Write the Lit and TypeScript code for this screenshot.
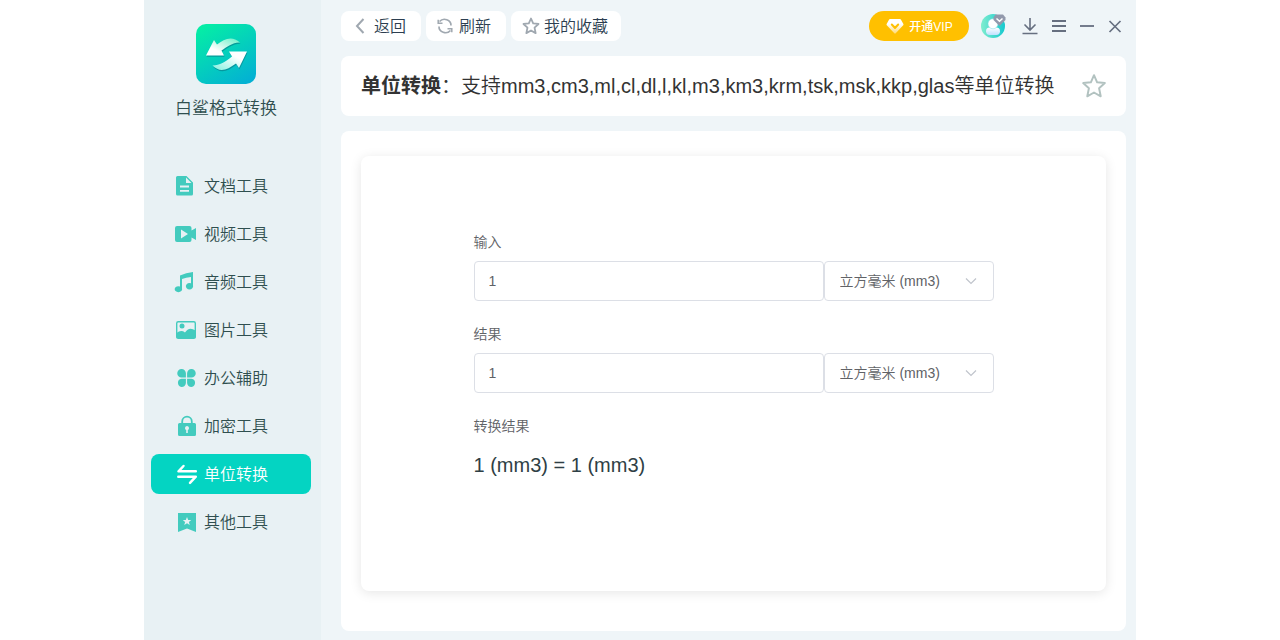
import { LitElement, html, css, svg } from "lit";
import { customElement, state } from "lit/decorators.js";
import { classMap } from "lit/directives/class-map.js";

const NAV = [
  {
    label: "文档工具",
    icon: svg`<path fill="currentColor" fill-rule="evenodd" d="M3.500 2H12.500L19 8.500V20a1.500 1.500 0 0 1-1.500 1.500H3.500A1.500 1.500 0 0 1 2 20V3.500A1.500 1.500 0 0 1 3.500 2zM12 3.500V9H17.500zM6 11.600V13.400H15V11.600zM6 16V17.800H15V16z"/>`,
  },
  {
    label: "视频工具",
    icon: svg`<path fill="currentColor" fill-rule="evenodd" d="M3 4H15.500a2 2 0 0 1 2 2V8.500L22 6V18L17.500 15.500V18a2 2 0 0 1-2 2H3a2 2 0 0 1-2-2V6a2 2 0 0 1 2-2zM7 7.500V16.500L14 12z"/>`,
  },
  {
    label: "音频工具",
    icon: svg`<path fill="currentColor" d="M6 5.500Q12 2.500 19 2V15.500A3.600 3.200 0 1 1 17 13.300V7Q12 7.300 8 9V18.500A3.700 3 0 1 1 6 16.500z"/>`,
  },
  {
    label: "图片工具",
    icon: svg`<rect x="2.700" y="3.700" width="18.600" height="16.600" rx="1.500" fill="none" stroke="currentColor" stroke-width="1.400"/><circle cx="8" cy="8" r="2.500" fill="currentColor"/><path fill="currentColor" d="M2.500 15Q7 11.500 11 14.500Q15 8 21.500 12.500V20H2.500z"/>`,
  },
  {
    label: "办公辅助",
    icon: svg`<path fill="currentColor" d="M7.500 3A4.200 4.200 0 0 1 11.900 7.200V11.500H7.500A4.200 4.200 0 0 1 7.500 3zM17.500 3A4.200 4.200 0 0 1 17.500 11.500H13.100V7.200A4.200 4.200 0 0 1 17.500 3zM7.500 21A4.200 4.200 0 0 1 7.500 12.700H11.900V17A4.200 4.200 0 0 1 7.500 21zM17.500 21A4.200 4.200 0 0 1 13.100 17V12.700H17.500A4.200 4.200 0 0 1 17.500 21z"/>`,
  },
  {
    label: "加密工具",
    icon: svg`<path d="M8.200 9.500V7.500a4.800 4.800 0 0 1 9.600 0V9.500" fill="none" stroke="currentColor" stroke-width="1.800"/><path fill="currentColor" fill-rule="evenodd" d="M5.500 9H20.500a1.500 1.500 0 0 1 1.500 1.500V20.500a1.500 1.500 0 0 1-1.500 1.500H5.500a1.500 1.500 0 0 1-1.500-1.500V10.500A1.500 1.500 0 0 1 5.500 9zM13 12a2.100 2.100 0 0 0-.8 4V19h1.600V16a2.100 2.100 0 0 0-.8-4z"/>`,
  },
  {
    label: "单位转换",
    icon: svg`<path d="M9.500 4L4.500 9.300H21.800M4.300 14.700H21.800L16 20.800" fill="none" stroke="currentColor" stroke-width="2.500" stroke-linecap="round" stroke-linejoin="round"/>`,
  },
  {
    label: "其他工具",
    icon: svg`<path fill="currentColor" fill-rule="evenodd" d="M4 3H22V22L13 18.500L4 22zM13 7L11.800 10H8.800L11.100 12L10.300 15L13 13.300L15.700 15L14.900 12L17.200 10H14.200z"/>`,
  },
];

const UNITS = [
  ["mm3", "立方毫米", 1],
  ["cm3", "立方厘米", 1e3],
  ["ml", "毫升", 1e3],
  ["cl", "厘升", 1e4],
  ["dl", "分升", 1e5],
  ["l", "升", 1e6],
  ["kl", "千升", 1e9],
  ["m3", "立方米", 1e9],
] as const;

const STAR = "M12 2L14.900 8.600L22 9.300L16.700 14.100L18.200 21.500L12 18L5.800 21.500L7.300 14.100L2 9.300L9.100 8.600z";

@customElement("app-root")
export class AppRoot extends LitElement {
  @state() private active = "单位转换";
  @state() private amount = "1";
  @state() private from = "mm3";
  @state() private to = "mm3";

  static styles = css`
    :host {
      display: block;
      background: #fff;
      color: #2c3e50;
      font-family: "Liberation Sans", "Noto Sans CJK SC", sans-serif;
    }
    * { box-sizing: border-box; }
    button, input, select { font: inherit; color: inherit; margin: 0; }
    button { border: 0; padding: 0; background: none; cursor: pointer; }
    svg { display: block; flex: none; }
    .cjk { font-weight: 350; }
    .window {
      display: flex;
      max-width: 992px;
      min-height: 100vh;
      margin: 0 auto;
      background: #eff5f8;
    }
    .sidebar {
      flex: 0 0 177px;
      background: #e8f1f4;
      padding: 24px 10px 0 7px;
    }
    .brand {
      display: flex;
      flex-direction: column;
      align-items: center;
      gap: 12px;
      padding-right: 10px;
      color: #2f4f4f;
      font-size: 17px;
      line-height: 26px;
      margin: 0 0 44px;
    }
    .nav { display: flex; flex-direction: column; gap: 8px; }
    .item {
      display: flex;
      align-items: center;
      gap: 6px;
      height: 40px;
      padding-left: 23px;
      border-radius: 8px;
      color: #2f4f4f;
      font-size: 16px;
      text-decoration: none;
    }
    .item span { padding-bottom: 2px; }
    .item svg { color: #43cbbe; }
    .item.active, .item.active svg { color: #fff; }
    .item.active { background: #04d4c2; }
    .main {
      flex: 1;
      min-width: 0;
      display: flex;
      flex-direction: column;
      gap: 15px;
      padding: 11px 10px 9px 20px;
    }
    .bar { display: flex; align-items: center; justify-content: space-between; height: 30px; }
    .group { display: flex; align-items: center; gap: 5px; }
    .tool {
      display: flex;
      align-items: center;
      gap: 5px;
      height: 30px;
      padding: 0 15px 0 10px;
      border-radius: 8px;
      background: #fff;
      font-size: 16px;
    }
    .tool svg { color: #a0a8b0; }
    .tool.wide { gap: 4px; padding: 0 13px 0 11px; }
    .vip {
      display: flex;
      align-items: center;
      justify-content: center;
      gap: 4px;
      width: 100px;
      height: 30px;
      margin-right: 12px;
      border-radius: 15px;
      background: #ffc000;
      color: #fff;
      font-size: 12px;
      font-weight: 500;
    }
    .vip span, .tool span { padding-bottom: 2px; }
    .actions { display: flex; align-items: center; color: #666f80; }
    .controls { display: flex; align-items: center; gap: 14px; padding: 0 4px 0 16px; }
    .head {
      display: flex;
      align-items: center;
      justify-content: space-between;
      min-height: 60px;
      padding: 0 19px 0 20px;
      border-radius: 8px;
      background: #fff;
      color: #333;
    }
    .title { margin: 0; font-size: 20px; line-height: 28px; font-weight: 350; }
    .title strong { font-weight: 700; }
    .fav svg { color: #b2c2c0; }
    .panel {
      flex: 1;
      display: flex;
      padding: 25px 20px 40px;
      border-radius: 8px;
      background: #fff;
    }
    .card {
      flex: 1;
      padding: 76px 20px;
      border-radius: 8px;
      background: #fff;
      box-shadow: 0 2px 12px rgba(0, 0, 0, 0.1);
    }
    .form { max-width: 520px; margin: 0 auto; color: #606266; font-size: 14px; }
    .label { display: block; line-height: 20px; margin-bottom: 9px; }
    .row { display: flex; margin-bottom: 23px; }
    .field {
      height: 40px;
      border: 1px solid #dcdfe6;
      border-radius: 4px;
      background: #fff;
      outline: none;
      padding: 0 14px;
    }
    .field:focus { border-color: #04d4c2; }
    .number { flex: 1; min-width: 0; }
    .pick { position: relative; flex: 0 0 170px; }
    .pick select { width: 100%; appearance: none; padding: 0 36px 0 15px; }
    .pick svg { position: absolute; right: 16px; top: 13px; color: #c0c4cc; pointer-events: none; }
    .result { display: block; color: #2f3f45; font-size: 20px; line-height: 40px; }
  `;

  private get converted(): string {
    const rate = (u: string) => UNITS.find((x) => x[0] === u)![2];
    return String((Number(this.amount) * rate(this.from)) / rate(this.to));
  }

  private picker(id: string, label: string, value: string, set: (v: string) => void) {
    return html`<div class="pick">
      <select class="field cjk" id=${id} aria-label=${label} @change=${(e: Event) => set((e.target as HTMLSelectElement).value)}>
        ${UNITS.map((u) => html`<option value=${u[0]} ?selected=${u[0] === value}>${u[1]} (${u[0]})</option>`)}
      </select>
      <svg width="14" height="14" viewBox="0 0 14 14" fill="none" stroke="currentColor" stroke-width="1.200"><path d="M2 4.500L7 9.500L12 4.500"/></svg>
    </div>`;
  }

  render() {
    return html`<div class="window">
      <aside class="sidebar">
        <div class="brand cjk">
          <svg width="60" height="60" viewBox="0 0 60 60">
            <defs>
              <linearGradient id="bg" x1="0.200" y1="0" x2="0.800" y2="1"><stop offset="0" stop-color="#05eda6"/><stop offset="1" stop-color="#03b1d3"/></linearGradient>
              <linearGradient id="a1" x1="0" y1="1" x2="1" y2="0"><stop offset="0.300" stop-color="#fff"/><stop offset="1" stop-color="#63efc4"/></linearGradient>
              <linearGradient id="a2" x1="1" y1="0" x2="0" y2="1"><stop offset="0.300" stop-color="#fff"/><stop offset="1" stop-color="#80f1df"/></linearGradient>
            </defs>
            <rect width="60" height="60" rx="10" fill="url(#bg)"/>
            <g fill="#087f8b" opacity="0.650" transform="translate(0.500 1.300)">
              <path d="M10 31.500L18 16L21 20.500C28 15 36 11 44 18.500C37 18 31 23 25.500 26.500L28 31.500z"/>
              <path d="M51 27.500H33L36 32.500C29 38 24 41 16.500 41.500C24 49 31 46 40 39.500L43 44z"/>
            </g>
            <path fill="url(#a1)" d="M10 31.500L18 16L21 20.500C28 15 36 11 44 18.500C37 18 31 23 25.500 26.500L28 31.500z"/>
            <path fill="url(#a2)" d="M51 27.500H33L36 32.500C29 38 24 41 16.500 41.500C24 49 31 46 40 39.500L43 44z"/>
          </svg>
          <span>白鲨格式转换</span>
        </div>
        <nav class="nav">
          ${NAV.map(
            (n) => html`<a href="#" class=${classMap({ item: true, cjk: true, active: n.label === this.active })}
              @click=${(e: Event) => { e.preventDefault(); this.active = n.label; }}>
              <svg width="24" height="24" viewBox="0 0 24 24">${n.icon}</svg><span>${n.label}</span></a>`,
          )}
        </nav>
      </aside>
      <main class="main">
        <header class="bar">
          <div class="group">
            <button class="tool cjk">
              <svg width="18" height="18" viewBox="0 0 18 18" fill="none" stroke="currentColor" stroke-width="2"><path d="M12.500 2L6 9L12.500 16"/></svg><span>返回</span>
            </button>
            <button class="tool cjk">
              <svg width="18" height="18" viewBox="0 0 18 18" fill="none" stroke="currentColor" stroke-width="1.700"><path d="M3.500 4.500A6.500 6 0 0 1 15 8.500M14.500 13.500A6.500 6 0 0 1 3 9.500"/><path d="M2.200 2.800V6.200H6.500M15.800 15.200V11.800H11.500" stroke-width="1.500"/></svg><span>刷新</span>
            </button>
            <button class="tool wide cjk">
              <svg width="18" height="18" viewBox="0 0 24 24" fill="none" stroke="currentColor" stroke-width="2.400" stroke-linejoin="round"><path d=${STAR}/></svg><span>我的收藏</span>
            </button>
          </div>
          <div class="actions">
            <button class="vip">
              <svg width="20" height="18" viewBox="0 0 20 18"><defs><linearGradient id="gem" x1="0" y1="0" x2="0" y2="1"><stop offset="0.300" stop-color="#fff"/><stop offset="1" stop-color="#ffdf83"/></linearGradient></defs><path fill="url(#gem)" stroke="url(#gem)" stroke-width="2" stroke-linejoin="round" d="M5 3H15L17.500 7.500L10 15.500L2.500 7.500z"/><path d="M6.800 7.500L10 11L13.200 7.500" fill="none" stroke="#ffc000" stroke-width="2" stroke-linecap="round" stroke-linejoin="round"/></svg><span>开通VIP</span>
            </button>
            <button class="avatar" aria-label="用户">
              <svg width="25" height="26" viewBox="0 0 25 26">
                <defs>
                  <linearGradient id="disc"><stop offset="0" stop-color="#80edcf"/><stop offset="1" stop-color="#15c9cf"/></linearGradient>
                  <linearGradient id="body" x1="0" y1="0" x2="0" y2="1"><stop offset="0" stop-color="#fff"/><stop offset="1" stop-color="#bfe1ff"/></linearGradient>
                </defs>
                <circle cx="12" cy="13" r="12" fill="url(#disc)"/>
                <rect x="5" y="14.500" width="14" height="7.500" rx="3.700" fill="url(#body)"/>
                <circle cx="12" cy="10.800" r="5" fill="#fff" stroke="#7ddbe0" stroke-width="0.500"/>
                <path fill="#9299ac" d="M14.500 1.500H22L24.500 4.500V7L18.500 13L12.500 7V4.500z"/>
                <path d="M15.500 5.500L18.500 8.300L21.500 5.500" fill="none" stroke="#fff" stroke-width="1.500"/>
              </svg>
            </button>
            <div class="controls">
              <button aria-label="下载"><svg width="16" height="18" viewBox="0 0 16 18" fill="none" stroke="currentColor" stroke-width="1.600"><path d="M8 1V13M2.500 7.500L8 13L13.500 7.500M0.500 16.500H15.500"/></svg></button>
              <button aria-label="菜单"><svg width="14" height="14" viewBox="0 0 14 14" fill="none" stroke="currentColor" stroke-width="1.800"><path d="M0 2H14M0 7H14M0 12H14"/></svg></button>
              <button aria-label="最小化"><svg width="14" height="14" viewBox="0 0 14 14" fill="none" stroke="currentColor" stroke-width="1.800"><path d="M0 7H14"/></svg></button>
              <button aria-label="关闭"><svg width="14" height="14" viewBox="0 0 14 14" fill="none" stroke="currentColor" stroke-width="1.700"><path d="M1.500 2L12.500 13M12.500 2L1.500 13"/></svg></button>
            </div>
          </div>
        </header>
        <section class="head">
          <h1 class="title"><strong>单位转换</strong>：支持mm3,cm3,ml,cl,dl,l,kl,m3,km3,krm,tsk,msk,kkp,glas等单位转换</h1>
          <button class="fav" aria-label="收藏"><svg width="26" height="26" viewBox="0 0 24 24" fill="none" stroke="currentColor" stroke-width="1.800" stroke-linejoin="round"><path d=${STAR}/></svg></button>
        </section>
        <section class="panel">
          <div class="card">
            <form class="form" @submit=${(e: Event) => e.preventDefault()}>
              <label class="label cjk" for="amount">输入</label>
              <div class="row">
                <input class="field number" id="amount" type="text" .value=${this.amount}
                  @input=${(e: Event) => (this.amount = (e.target as HTMLInputElement).value)} />
                ${this.picker("from", "输入单位", this.from, (v) => (this.from = v))}
              </div>
              <label class="label cjk" for="converted">结果</label>
              <div class="row">
                <input class="field number" id="converted" type="text" readonly .value=${this.converted} />
                ${this.picker("to", "结果单位", this.to, (v) => (this.to = v))}
              </div>
              <label class="label cjk" for="summary">转换结果</label>
              <output class="result" id="summary">${this.amount} (${this.from}) = ${this.converted} (${this.to})</output>
            </form>
          </div>
        </section>
      </main>
    </div>`;
  }
}
